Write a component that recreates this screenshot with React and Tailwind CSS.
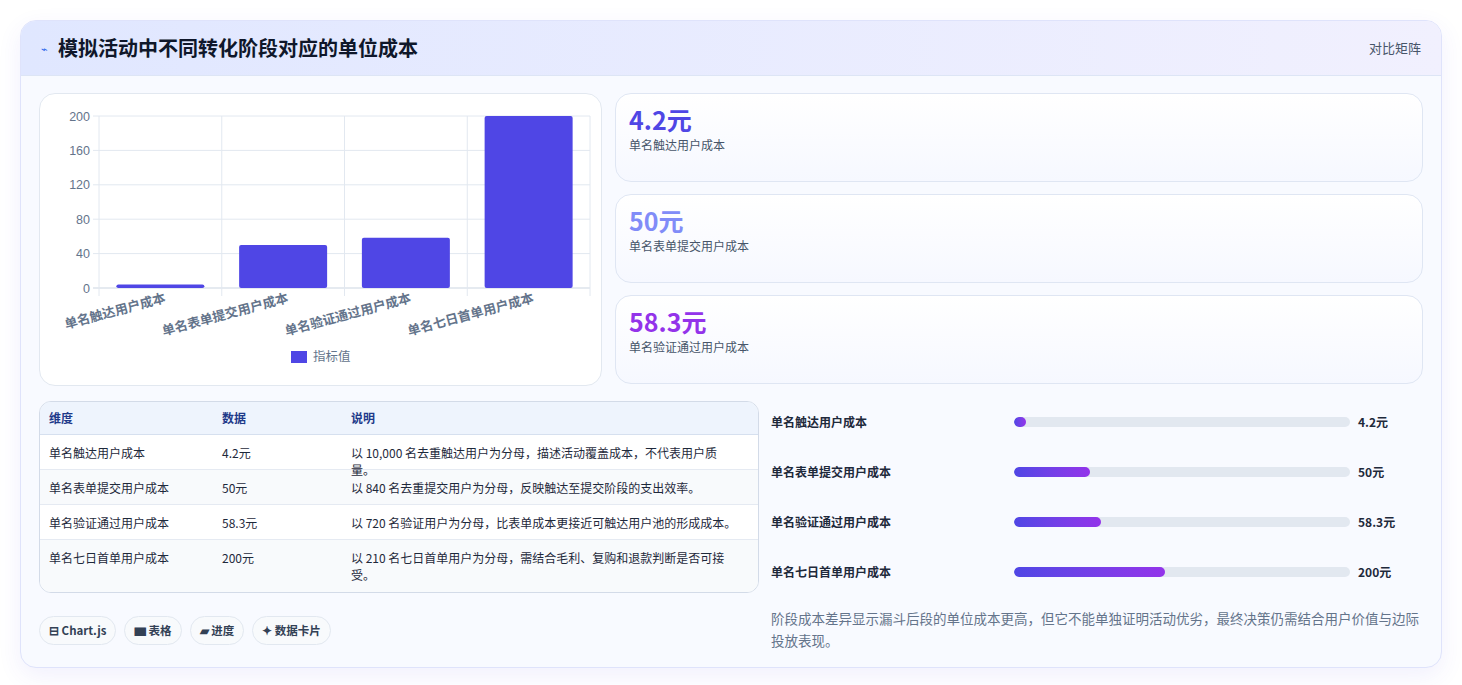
import React from "react";

const F = { fontFamily: '"Noto Sans CJK SC","Noto Sans",sans-serif' };

function Chart() {
  const x0 = 59, x1 = 550, y0 = 22, y1 = 194;
  const h = y1 - y0;
  const cw = (x1 - x0) / 4;
  const vals = [4.2, 50, 58.3, 200];
  const labels = ["单名触达用户成本", "单名表单提交用户成本", "单名验证通过用户成本", "单名七日首单用户成本"];
  return (
    <svg width="560" height="290" className="block" style={F}>
      {[0, 40, 80, 120, 160, 200].map((v) => {
        const y = y1 - (v / 200) * h;
        return (
          <g key={v}>
            <line x1={x0 - 6} x2={x1} y1={y} y2={y} stroke={v === 0 ? "#cbd5e1" : "#e2e8f0"} />
            <text x={x0 - 9} y={y + 4.5} textAnchor="end" fontSize="12.5" fill="#64748b" fontFamily="Liberation Sans, sans-serif">{v}</text>
          </g>
        );
      })}
      {[0, 1, 2, 3, 4].map((i) => (
        <line key={i} x1={x0 + i * cw} x2={x0 + i * cw} y1={y0} y2={y1 + 8} stroke="#e2e8f0" />
      ))}
      {vals.map((v, i) => {
        const bh = Math.max((v / 200) * h, 3);
        const cx = x0 + i * cw + cw / 2;
        return <rect key={i} x={cx - 44} y={y1 - bh} width="88" height={bh} rx="2" fill="#4f46e5" />;
      })}
      {labels.map((l, i) => {
        const cx = x0 + i * cw + cw / 2;
        return (
          <text key={i} x={cx + 6} y={y1 + 14} textAnchor="end" fontSize="13" fontWeight="700" fill="#64748b" transform={`rotate(-15 ${cx + 6} ${y1 + 14})`}>{l}</text>
        );
      })}
      <rect x="251" y="257" width="16" height="12" fill="#4f46e5" />
      <text x="273" y="267" fontSize="12.5" fill="#64748b">指标值</text>
    </svg>
  );
}

const rows = [
  ["单名触达用户成本", "4.2元", "以 10,000 名去重触达用户为分母，描述活动覆盖成本，不代表用户质量。"],
  ["单名表单提交用户成本", "50元", "以 840 名去重提交用户为分母，反映触达至提交阶段的支出效率。"],
  ["单名验证通过用户成本", "58.3元", "以 720 名验证用户为分母，比表单成本更接近可触达用户池的形成成本。"],
  ["单名七日首单用户成本", "200元", "以 210 名七日首单用户为分母，需结合毛利、复购和退款判断是否可接受。"],
];

const bars = [
  ["单名触达用户成本", "4.2元", 3.5],
  ["单名表单提交用户成本", "50元", 22.5],
  ["单名验证通过用户成本", "58.3元", 26],
  ["单名七日首单用户成本", "200元", 45],
];

export default function App() {
  return (
    <div className="min-h-[685px] bg-white pt-5 px-5" style={F}>
      <div className="rounded-2xl border border-[#dfe3fb] bg-[#f8faff] overflow-hidden shadow-[0_8px_24px_rgba(79,70,229,0.08)]">
        <div className="h-[55px] flex items-center justify-between px-5 bg-gradient-to-r from-[#e0e7ff] to-[#f1f0fe] border-b border-[#dde5f5]">
          <div className="flex items-center gap-2.5">
            <span className="text-[11px] text-[#2563eb]">⌁</span>
            <h1 className="text-[20px] font-bold text-[#0f172a]">模拟活动中不同转化阶段对应的单位成本</h1>
          </div>
          <span className="text-[13px] text-[#475569]">对比矩阵</span>
        </div>
        <div className="px-[18px] pt-[17px] pb-[16px]">
          <div className="flex gap-[13px]">
            <div className="w-[563px] h-[293px] shrink-0 rounded-2xl border border-[#e2e8f0] bg-white">
              <Chart />
            </div>
            <div className="flex-1 flex flex-col gap-[12px]">
              {[["4.2元", "text-[#4f46e5]", "单名触达用户成本"], ["50元", "text-[#818cf8]", "单名表单提交用户成本"], ["58.3元", "text-[#9333ea]", "单名验证通过用户成本"]].map(([v, c, l]) => (
                <div key={l} className="h-[89px] rounded-2xl border border-[#dfe6f3] bg-gradient-to-b from-white to-[#f6f8ff] px-[13px] pt-[10px]">
                  <div className={`text-[25px] font-bold leading-[30px] ${c}`}>{v}</div>
                  <div className="text-[12px] text-[#475569] mt-[2px]">{l}</div>
                </div>
              ))}
            </div>
          </div>
          <div className="flex gap-3 mt-[15px]">
            <div className="w-[720px] shrink-0">
              <div className="rounded-xl border border-[#d3dbe8] overflow-hidden bg-white">
                <div className="grid grid-cols-[173px_129px_1fr] h-[33px] items-center px-[9px] bg-[#eef4fd] border-b border-[#d6e0ef] text-[12px] font-bold text-[#1e3a8a]">
                  <div>维度</div><div>数据</div><div>说明</div>
                </div>
                {rows.map((r, i) => (
                  <div key={i} className={`grid grid-cols-[173px_129px_1fr] px-[9px] text-[12px] text-[#1e293b] leading-[17px] pt-[9px] ${i < 3 ? "h-[35px] border-b border-[#e5eaf2]" : "pb-[9px]"} ${i % 2 ? "bg-[#f8fafc]" : "bg-white"}`}>
                    <div>{r[0]}</div><div>{r[1]}</div><div className="pr-3">{r[2]}</div>
                  </div>
                ))}
              </div>
              <div className="flex gap-2 mt-[23px]">
                {["⊟ Chart.js", "▆ 表格", "▰ 进度", "✦ 数据卡片"].map((t) => (
                  <span key={t} className="h-[29px] px-[9px] flex items-center rounded-full border border-[#e2e8f0] bg-[#f8fafc] text-[11.5px] font-bold text-[#334155]">{t}</span>
                ))}
              </div>
            </div>
            <div className="flex-1 pt-[10px]">
              {bars.map(([l, v, p]) => (
                <div key={l} className="h-[50px] flex items-start pt-[2px]">
                  <div className="w-[243px] text-[12px] font-bold text-[#1e293b] leading-[17px]">{l}</div>
                  <div className="w-[336px] h-[10px] mt-[4px] rounded-full bg-[#e2e8f0] overflow-hidden">
                    <div className="h-full rounded-full bg-gradient-to-r from-[#4f46e5] to-[#9333ea]" style={{ width: p + "%" }} />
                  </div>
                  <div className="ml-[8px] text-[12px] font-bold text-[#1e293b] leading-[17px]">{v}</div>
                </div>
              ))}
              <p className="mt-[-4px] text-[13.5px] leading-[22px] text-[#64748b]">阶段成本差异显示漏斗后段的单位成本更高，但它不能单独证明活动优劣，最终决策仍需结合用户价值与边际投放表现。</p>
            </div>
          </div>
        </div>
      </div>
    </div>
  );
}
